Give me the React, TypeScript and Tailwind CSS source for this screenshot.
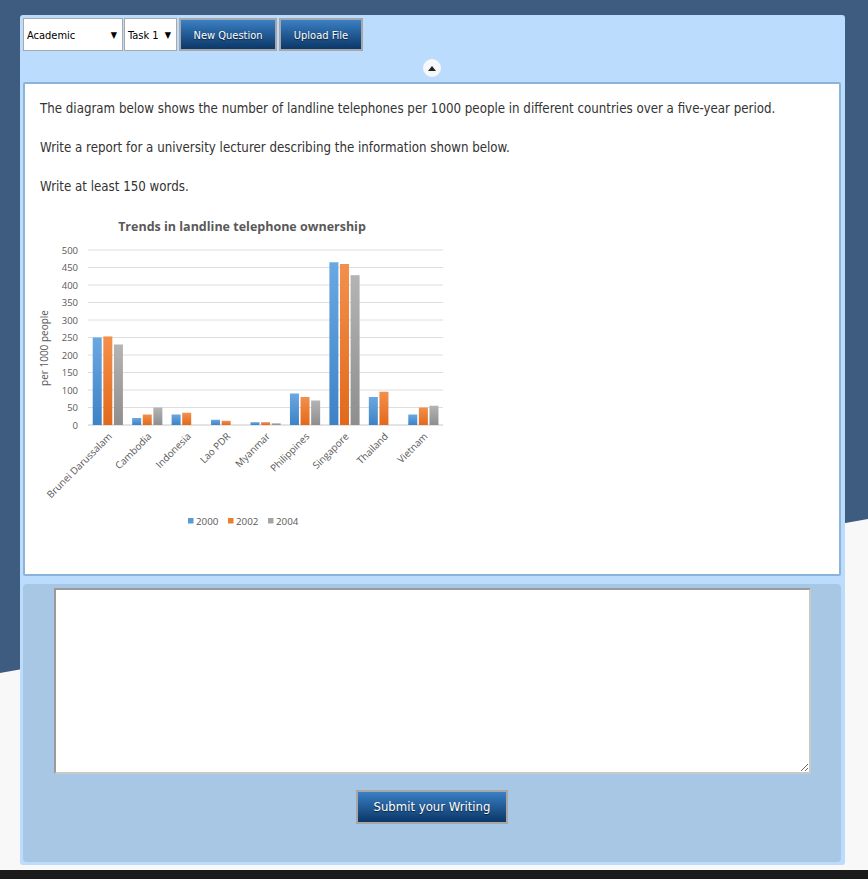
import React from "react";

const CATS = [
  { name: "Brunei Darussalam", v: [250, 253, 230] },
  { name: "Cambodia", v: [20, 30, 50] },
  { name: "Indonesia", v: [30, 35, 0] },
  { name: "Lao PDR", v: [15, 12, 0] },
  { name: "Myanmar", v: [8, 8, 5] },
  { name: "Philippines", v: [90, 80, 70] },
  { name: "Singapore", v: [465, 460, 428] },
  { name: "Thailand", v: [80, 95, 0] },
  { name: "Vietnam", v: [30, 50, 55] },
];

const FILLS = ["url(#gBlue)", "url(#gOrange)", "url(#gGray)"];
const LEGEND = [
  { label: "2000", color: "#5b9bd5" },
  { label: "2002", color: "#ed7d31" },
  { label: "2004", color: "#a5a5a5" },
];

// chart drawn in page coords (viewBox offset)
const X0 = 90;
const X1 = 445;
const Y0 = 425;
const PX = 0.35;
const STEP = (X1 - X0) / CATS.length;

function Chart() {
  const ticks = [0, 50, 100, 150, 200, 250, 300, 350, 400, 450, 500];
  return (
    <svg
      width={420}
      height={335}
      viewBox="40 205 420 335"
      className="mt-[8px] -ml-[2px] block"
      style={{ fontFamily: '"Open Sans", "Liberation Sans", sans-serif' }}
    >
      <defs>
        <linearGradient id="gBlue" x1="0" y1="0" x2="0" y2="1">
          <stop offset="0" stopColor="#6aa8e2" />
          <stop offset="1" stopColor="#3e82c6" />
        </linearGradient>
        <linearGradient id="gOrange" x1="0" y1="0" x2="0" y2="1">
          <stop offset="0" stopColor="#f3904c" />
          <stop offset="1" stopColor="#e2691b" />
        </linearGradient>
        <linearGradient id="gGray" x1="0" y1="0" x2="0" y2="1">
          <stop offset="0" stopColor="#b4b4b4" />
          <stop offset="1" stopColor="#8e8e8e" />
        </linearGradient>
      </defs>
      <text x={244} y={231} textAnchor="middle" fontSize={12.5} fontWeight={700} fill="#595959">
        Trends in landline telephone ownership
      </text>
      {ticks.map((t) => {
        const y = Y0 - t * PX;
        return (
          <g key={t}>
            <line x1={X0} x2={X1} y1={y} y2={y} stroke={t === 0 ? "#c8c8c8" : "#dedede"} strokeWidth={1} />
            <text x={80} y={y + 3.5} textAnchor="end" fontSize={9.5} fill="#595959">
              {t}
            </text>
          </g>
        );
      })}
      <text
        x={0}
        y={0}
        transform="translate(50 348) rotate(-90)"
        textAnchor="middle"
        fontSize={10}
        fill="#595959"
      >
        per 1000 people
      </text>
      {CATS.map((c, i) => {
        const cx = X0 + STEP * (i + 0.5);
        return (
          <g key={c.name}>
            {c.v.map((v, j) =>
              v > 0 ? (
                <rect key={j} x={cx - 15 + j * 10.6} y={Y0 - v * PX} width={9} height={v * PX} fill={FILLS[j]} />
              ) : null
            )}
            <text
              x={0}
              y={0}
              transform={`translate(${cx + 5} ${Y0 + 12}) rotate(-45)`}
              textAnchor="end"
              fontSize={9.8}
              fill="#595959"
            >
              {c.name}
            </text>
          </g>
        );
      })}
      {LEGEND.map((l, i) => (
        <g key={l.label}>
          <rect x={190 + i * 40} y={518} width={5.5} height={5.5} fill={l.color} />
          <text x={198 + i * 40} y={524.5} fontSize={9.8} fill="#595959">
            {l.label}
          </text>
        </g>
      ))}
    </svg>
  );
}

function FakeSelect({ label, w }: { label: string; w: string }) {
  return (
    <div
      className={`${w} flex h-[33px] items-center justify-between border border-[#a9a9a9] bg-white pl-[3px] pr-[5px] pt-[3px] text-[11px] text-black`}
    >
      <span>{label}</span>
      <span className="text-[9px]">▼</span>
    </div>
  );
}

function BlueButton({ children, className = "" }: { children: React.ReactNode; className?: string }) {
  return (
    <button
      className={`flex items-center justify-center border-2 border-[#a7a7a7] bg-gradient-to-b from-[#3b80c5] to-[#0b3868] text-white [text-shadow:0_1px_1px_rgba(0,0,0,0.6)] ${className}`}
    >
      {children}
    </button>
  );
}

export default function App() {
  return (
    <div
      className="relative flex min-h-[879px] flex-col overflow-hidden bg-[#3d5c80]"
      style={{ fontFamily: 'Tahoma, "DejaVu Sans Condensed", "Liberation Sans", sans-serif' }}
    >
      <div className="pointer-events-none absolute inset-0 bg-[#f8f8f8] [clip-path:polygon(0_673px,100%_519px,100%_100%,0_100%)]" />

      <div className="relative ml-[20px] mt-[15px] flex h-[850px] w-[825px] flex-col rounded-[3px] bg-[#bbdcfc] pb-[3px] pl-[3px] pr-[4px] pt-[3px]">
        {/* toolbar */}
        <div className="flex items-center gap-[1px]">
          <FakeSelect label="Academic" w="w-[100px]" />
          <FakeSelect label="Task 1" w="w-[53px]" />
          <BlueButton className="ml-[1px] h-[33px] w-[98px] pt-[3px] text-[11px]">New Question</BlueButton>
          <BlueButton className="ml-[1px] h-[33px] w-[84px] pt-[3px] text-[11px]">Upload File</BlueButton>
        </div>

        <div className="flex justify-center pt-[8px] pb-[5px]">
          <button className="flex h-[18px] w-[18px] items-center justify-center rounded-full bg-[#f6f8fb]">
            <span className="h-0 w-0 border-x-[4px] border-b-[5px] border-x-transparent border-b-[#222]" />
          </button>
        </div>

        {/* question */}
        <div className="h-[494px] rounded-[2px] border-2 border-[#8cb4d8] bg-white px-[15px] pt-[15px] text-[13.2px] leading-[20px] text-[#333]">
          <p>The diagram below shows the number of landline telephones per 1000 people in different countries over a five-year period.</p>
          <p className="mt-[19px]">Write a report for a university lecturer describing the information shown below.</p>
          <p className="mt-[19px]">Write at least 150 words.</p>
          <Chart />
        </div>

        {/* answer */}
        <div className="mt-[8px] flex flex-1 flex-col items-center rounded-[4px] bg-[#a7c7e5] pt-[4px]">
          <textarea className="h-[186px] w-[757px] resize-y border-2 border-[#9a9a9a] border-b-[#c9c9c9] border-r-[#c9c9c9] bg-white p-1 text-[14px] outline-none" />
          <BlueButton className="mt-[16px] h-[34px] w-[152px] text-[13px]">Submit your Writing</BlueButton>
        </div>
      </div>

      <div className="relative mt-auto h-[9px] bg-[#1b1b1b]" />
    </div>
  );
}
